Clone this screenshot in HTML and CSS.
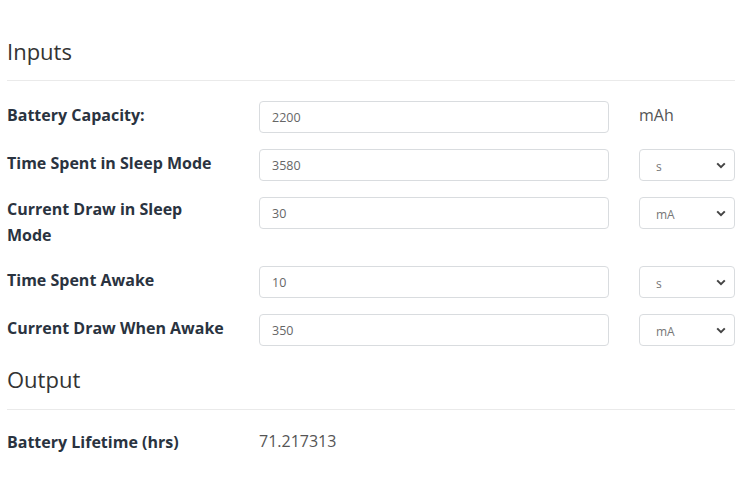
FILE: index.html
```html
<!DOCTYPE html>
<html>
<head>
<meta charset="utf-8">
<link rel="stylesheet" href="styles.css">
</head>
<body>
<div class="page">
  <h2 class="section-title first">Inputs</h2>
  <hr class="divider">
  <div class="form-row">
    <label class="field-label">Battery Capacity:</label>
    <input class="field-input" type="text" value="2200">
    <span class="unit-text">mAh</span>
  </div>
  <div class="form-row">
    <label class="field-label">Time Spent in Sleep Mode</label>
    <input class="field-input" type="text" value="3580">
    <div class="unit-select"><span>s</span><svg class="chev" width="10" height="7" viewBox="0 0 10 7"><path d="M1.2 1.4 L5 5.2 L8.8 1.4" fill="none" stroke="#444" stroke-width="2"/></svg></div>
  </div>
  <div class="form-row">
    <label class="field-label two-line">Current Draw in Sleep Mode</label>
    <input class="field-input" type="text" value="30">
    <div class="unit-select"><span>mA</span><svg class="chev" width="10" height="7" viewBox="0 0 10 7"><path d="M1.2 1.4 L5 5.2 L8.8 1.4" fill="none" stroke="#444" stroke-width="2"/></svg></div>
  </div>
  <div class="form-row">
    <label class="field-label">Time Spent Awake</label>
    <input class="field-input" type="text" value="10">
    <div class="unit-select"><span>s</span><svg class="chev" width="10" height="7" viewBox="0 0 10 7"><path d="M1.2 1.4 L5 5.2 L8.8 1.4" fill="none" stroke="#444" stroke-width="2"/></svg></div>
  </div>
  <div class="form-row">
    <label class="field-label">Current Draw When Awake</label>
    <input class="field-input" type="text" value="350">
    <div class="unit-select"><span>mA</span><svg class="chev" width="10" height="7" viewBox="0 0 10 7"><path d="M1.2 1.4 L5 5.2 L8.8 1.4" fill="none" stroke="#444" stroke-width="2"/></svg></div>
  </div>
  <h2 class="section-title second">Output</h2>
  <hr class="divider">
  <div class="output-row">
    <span class="field-label">Battery Lifetime (hrs)</span>
    <span class="output-value">71.217313</span>
  </div>
</div>
</body>
</html>
```
FILE: styles.css
```css
* { box-sizing: border-box; }
body {
  margin: 0;
  background: #fff;
  font-family: "Open Sans", "Noto Sans", sans-serif;
}
.page {
  padding: 0 15px 0 7px;
}
.section-title {
  font-size: 22px;
  line-height: 26px;
  font-weight: 400;
  color: #333;
  margin: 0;
}
.section-title.first { padding-top: 38px; }
.section-title.second { margin-top: 20px; }
.divider {
  border: 0;
  border-top: 1px solid #eaeaea;
  margin: 16px 0 20px;
  height: 0;
}
.second + .divider { margin: 17px 0 18px; }
.form-row {
  display: grid;
  grid-template-columns: 252px 350px 96px;
  column-gap: 0;
  align-items: start;
  margin-bottom: 16px;
}
.form-row > :nth-child(3) { margin-left: 30px; }
.field-label {
  font-size: 16px;
  font-weight: 700;
  color: #2a3340;
  line-height: 26px;
  padding-top: 1px;
}
.two-line {
  width: 200px;
  margin-top: -2px;
  padding-bottom: 2px;
}
.field-input {
  height: 32px;
  width: 350px;
  border: 1px solid #d9dcdf;
  border-radius: 4px;
  padding: 0 12px;
  font-family: inherit;
  font-size: 12.5px;
  color: #666;
  background: #fff;
  outline: none;
}
.unit-text {
  font-size: 16px;
  color: #555;
  line-height: 28px;
}
.unit-select {
  width: 96px;
  height: 32px;
  border: 1px solid #d9dcdf;
  border-radius: 4px;
  display: flex;
  align-items: center;
  justify-content: space-between;
  padding: 2px 8px 0 16px;
  font-size: 12px;
  color: #777;
}
.chev { display: block; margin-top: -2px; }
.output-row {
  display: grid;
  grid-template-columns: 252px auto;
  column-gap: 0;
}
.output-value {
  font-size: 16px;
  color: #555;
  line-height: 26px;
}
```
